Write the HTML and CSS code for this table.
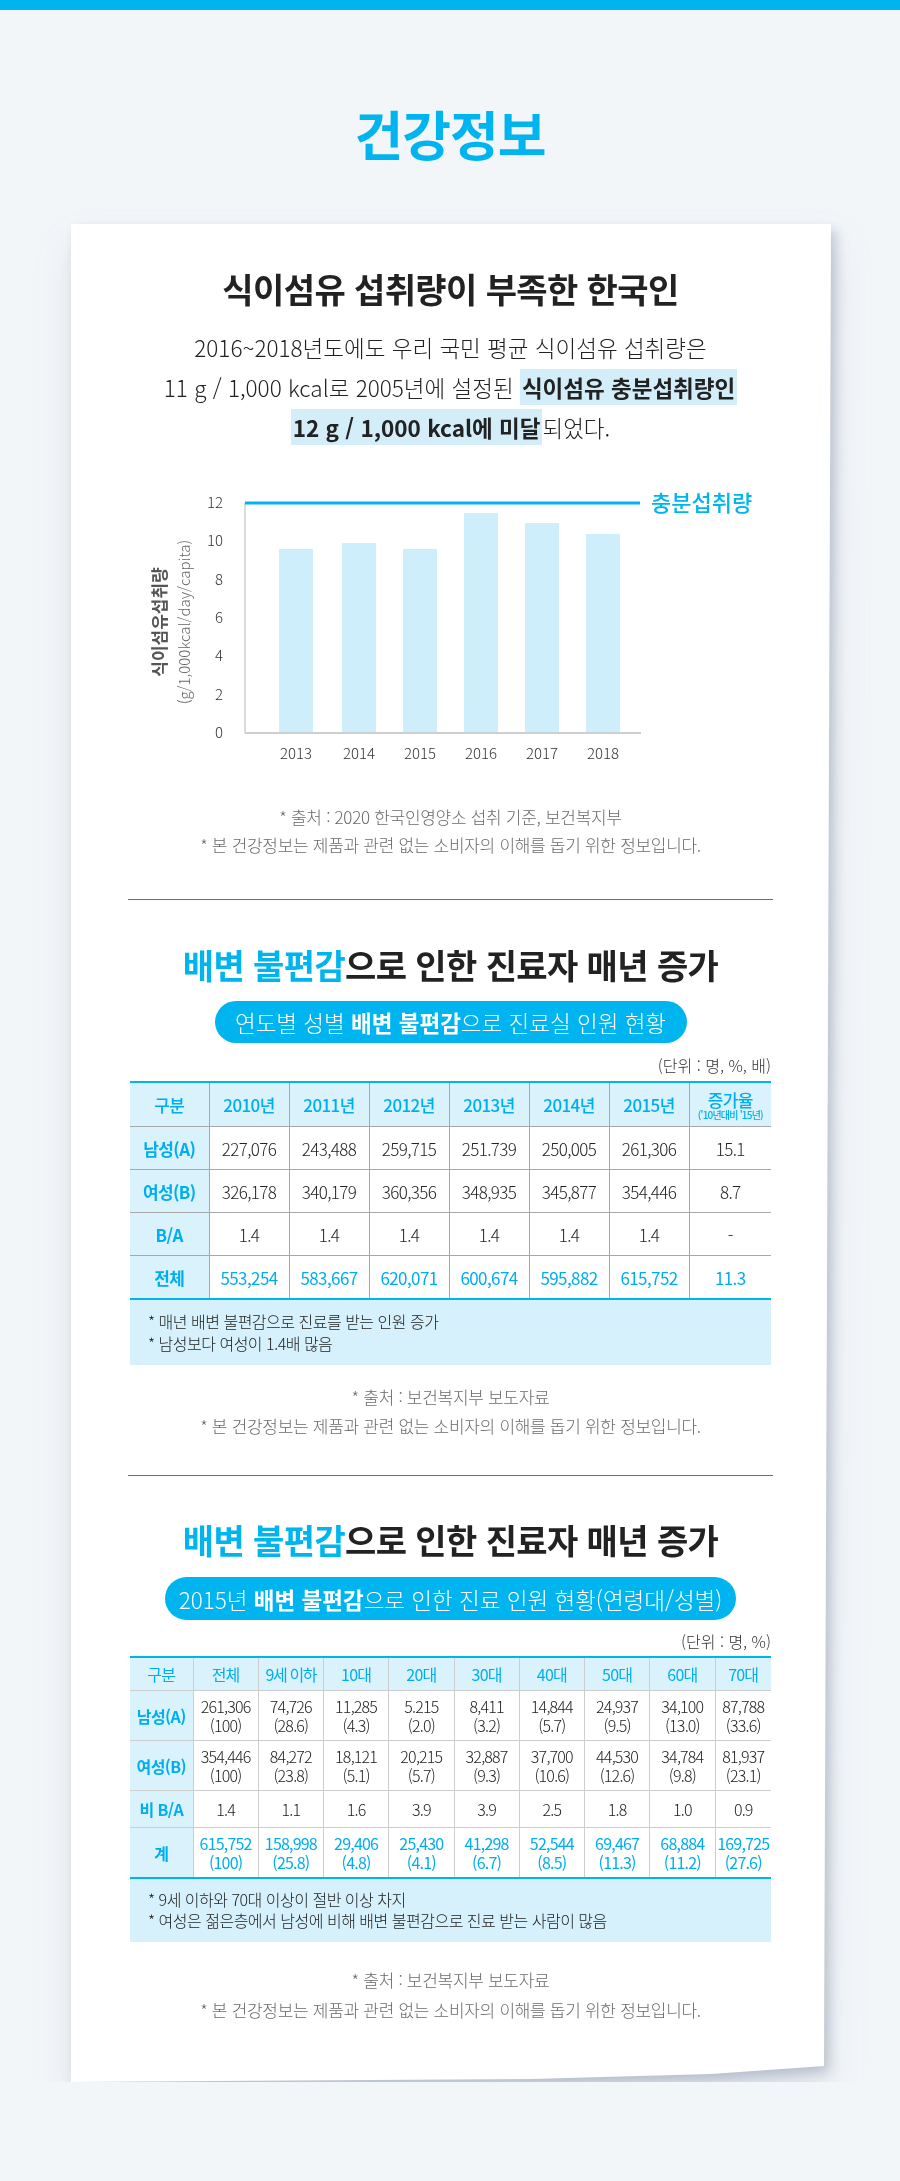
FILE: index.html
```html
<!DOCTYPE html>
<html lang="ko">
<head>
<meta charset="utf-8">
<title>건강정보</title>
<link rel="stylesheet" href="styles.css">
</head>
<body>
<div class="topbar"></div>
<h1 class="page-title">건강정보</h1>

<div class="card-shadow">
  <article class="card">
    <section class="sec sec1">
      <h2 class="heading">식이섬유 섭취량이 부족한 한국인</h2>
      <p class="lead">2016~2018년도에도 우리 국민 평균 식이섬유 섭취량은<br>11 g / 1,000 kcal로 2005년에 설정된 <span class="hl">식이섬유 충분섭취량인</span><br><span class="hl">12 g / 1,000 kcal에 미달</span>되었다.</p>
      <svg class="chart" width="645" height="290" viewBox="0 0 645 290">
        <g class="ytitle">
          <text class="ytitle-main" transform="translate(30,142) rotate(-90)" text-anchor="middle" dominant-baseline="central">식이섬유섭취량</text>
          <text class="ytitle-sub" transform="translate(55,142) rotate(-90)" text-anchor="middle" dominant-baseline="central">(g/1,000kcal/day/capita)</text>
        </g>
        <g class="ylab" text-anchor="end">
          <text x="95" y="28">12</text>
          <text x="95" y="66">10</text>
          <text x="95" y="105">8</text>
          <text x="95" y="143">6</text>
          <text x="95" y="181">4</text>
          <text x="95" y="220">2</text>
          <text x="95" y="258">0</text>
        </g>
        <g class="bars">
          <rect x="151" y="69" width="34" height="184"/>
          <rect x="214" y="63" width="34" height="190"/>
          <rect x="275" y="69" width="34" height="184"/>
          <rect x="336" y="33" width="34" height="220"/>
          <rect x="397" y="43" width="34" height="210"/>
          <rect x="458" y="54" width="34" height="199"/>
        </g>
        <line class="axis" x1="117" y1="23" x2="117" y2="253"/>
        <line class="axis base" x1="117" y1="253" x2="513" y2="253"/>
        <line class="target" x1="117" y1="23" x2="512" y2="23"/>
        <text class="target-label" x="523" y="31">충분섭취량</text>
        <g class="xlab" text-anchor="middle">
          <text x="168" y="279">2013</text>
          <text x="231" y="279">2014</text>
          <text x="292" y="279">2015</text>
          <text x="353" y="279">2016</text>
          <text x="414" y="279">2017</text>
          <text x="475" y="279">2018</text>
        </g>
      </svg>
      <div class="source s1">
        <p>* 출처 : 2020 한국인영양소 섭취 기준, 보건복지부</p>
        <p>* 본 건강정보는 제품과 관련 없는 소비자의 이해를 돕기 위한 정보입니다.</p>
      </div>
    </section>

    <hr class="divider d1">

    <section class="sec sec2">
      <h2 class="heading"><span class="blue">배변 불편감</span>으로 인한 진료자 매년 증가</h2>
      <div class="pill-row"><div class="pill pill1"><span>연도별 성별 <b>배변 불편감</b>으로 진료실 인원 현황</span></div></div>
      <p class="unit u1">(단위 : 명, %, 배)</p>
      <table class="tbl tbl1">
        <colgroup><col class="c0"><col><col><col><col><col><col><col class="cl"></colgroup>
        <thead>
          <tr><th>구분</th><th>2010년</th><th>2011년</th><th>2012년</th><th>2013년</th><th>2014년</th><th>2015년</th><th class="rate">증가율<small>('10년대비 '15년)</small></th></tr>
        </thead>
        <tbody>
          <tr><th>남성(A)</th><td>227,076</td><td>243,488</td><td>259,715</td><td>251.739</td><td>250,005</td><td>261,306</td><td>15.1</td></tr>
          <tr><th>여성(B)</th><td>326,178</td><td>340,179</td><td>360,356</td><td>348,935</td><td>345,877</td><td>354,446</td><td>8.7</td></tr>
          <tr><th>B/A</th><td>1.4</td><td>1.4</td><td>1.4</td><td>1.4</td><td>1.4</td><td>1.4</td><td>-</td></tr>
          <tr class="total"><th>전체</th><td>553,254</td><td>583,667</td><td>620,071</td><td>600,674</td><td>595,882</td><td>615,752</td><td>11.3</td></tr>
        </tbody>
      </table>
      <div class="notes n1">
        <p>* 매년 배변 불편감으로 진료를 받는 인원 증가</p>
        <p>* 남성보다 여성이 1.4배 많음</p>
      </div>
      <div class="source s2">
        <p>* 출처 : 보건복지부 보도자료</p>
        <p>* 본 건강정보는 제품과 관련 없는 소비자의 이해를 돕기 위한 정보입니다.</p>
      </div>
    </section>

    <hr class="divider d2">

    <section class="sec sec3">
      <h2 class="heading"><span class="blue">배변 불편감</span>으로 인한 진료자 매년 증가</h2>
      <div class="pill-row"><div class="pill pill2"><span>2015년 <b>배변 불편감</b>으로 인한 진료 인원 현황(연령대/성별)</span></div></div>
      <p class="unit u2">(단위 : 명, %)</p>
      <table class="tbl tbl2">
        <colgroup><col class="c0"><col><col><col><col><col><col><col><col><col class="cl"></colgroup>
        <thead>
          <tr><th>구분</th><th>전체</th><th class="tight">9세 이하</th><th>10대</th><th>20대</th><th>30대</th><th>40대</th><th>50대</th><th>60대</th><th>70대</th></tr>
        </thead>
        <tbody>
          <tr class="r2"><th>남성(A)</th><td>261,306<br>(100)</td><td>74,726<br>(28.6)</td><td>11,285<br>(4.3)</td><td>5.215<br>(2.0)</td><td>8,411<br>(3.2)</td><td>14,844<br>(5.7)</td><td>24,937<br>(9.5)</td><td>34,100<br>(13.0)</td><td>87,788<br>(33.6)</td></tr>
          <tr class="r2"><th>여성(B)</th><td>354,446<br>(100)</td><td>84,272<br>(23.8)</td><td>18,121<br>(5.1)</td><td>20,215<br>(5.7)</td><td>32,887<br>(9.3)</td><td>37,700<br>(10.6)</td><td>44,530<br>(12.6)</td><td>34,784<br>(9.8)</td><td>81,937<br>(23.1)</td></tr>
          <tr class="r1"><th>비 B/A</th><td>1.4</td><td>1.1</td><td>1.6</td><td>3.9</td><td>3.9</td><td>2.5</td><td>1.8</td><td>1.0</td><td>0.9</td></tr>
          <tr class="r2 total"><th>계</th><td>615,752<br>(100)</td><td>158,998<br>(25.8)</td><td>29,406<br>(4.8)</td><td>25,430<br>(4.1)</td><td>41,298<br>(6.7)</td><td>52,544<br>(8.5)</td><td>69,467<br>(11.3)</td><td>68,884<br>(11.2)</td><td>169,725<br>(27.6)</td></tr>
        </tbody>
      </table>
      <div class="notes n2">
        <p>* 9세 이하와 70대 이상이 절반 이상 차지</p>
        <p>* 여성은 젊은층에서 남성에 비해 배변 불편감으로 진료 받는 사람이 많음</p>
      </div>
      <div class="source s3">
        <p>* 출처 : 보건복지부 보도자료</p>
        <p>* 본 건강정보는 제품과 관련 없는 소비자의 이해를 돕기 위한 정보입니다.</p>
      </div>
    </section>
  </article>
</div>
</body>
</html>
```

FILE: styles.css
```css
html {
  background: #f3f6f9;
}
body {
  margin: 0;
  background: #f3f6f9;
  font-family: "Noto Sans CJK KR", "Noto Sans", sans-serif;
  color: #222;
}
p { margin: 0; }

.topbar {
  height: 10px;
  background: #00b5ef;
}

.page-title {
  margin: 93px 0 0;
  height: 60px;
  line-height: 60px;
  font-size: 53px;
  font-weight: 700;
  letter-spacing: -1px;
  color: #00b5ef;
  text-align: center;
}

.card-shadow {
  margin: 61px 0 0 71px;
  width: 760px;
  filter: drop-shadow(5px 6px 6px rgba(95, 112, 140, 0.32)) drop-shadow(2px 22px 18px rgba(110, 125, 150, 0.16));
}

.card {
  background: #fff;
  padding: 44px 58px 57px 57px;
  clip-path: polygon(0 0, 100% 0, calc(100% - 7px) calc(100% - 16px), calc(100% - 120px) calc(100% - 8px), calc(100% - 300px) calc(100% - 3px), 0 100%);
}

.heading {
  margin: 0;
  height: 42px;
  line-height: 42px;
  font-size: 34px;
  font-weight: 700;
  letter-spacing: -0.6px;
  color: #222;
  text-align: center;
  white-space: nowrap;
}
.heading .blue { color: #00b4ee; }

.lead {
  margin-top: 17px;
  font-size: 22.5px;
  font-weight: 300;
  line-height: 40px;
  letter-spacing: 0;
  text-align: center;
  color: #222;
}
.hl {
  background: #d3eef9;
  font-weight: 700;
  padding: 2px 2px;
}

.chart {
  display: block;
  margin-top: 33px;
  font-family: "Noto Sans CJK KR", "Noto Sans", sans-serif;
}
.chart .ylab text,
.chart .xlab text {
  font-size: 15px;
  font-weight: 300;
  fill: #333;
}
.chart .ytitle-main {
  font-size: 17px;
  font-weight: 700;
  fill: #555;
}
.chart .ytitle-sub {
  font-size: 15px;
  font-weight: 300;
  fill: #666;
}
.chart .bars rect { fill: #cdeefa; }
.chart .axis { stroke: #cfcfcf; stroke-width: 1.5; }
.chart .axis.base { stroke-width: 2; }
.chart .target { stroke: #00b5ef; stroke-width: 3; }
.chart .target-label {
  font-size: 22px;
  font-weight: 500;
  fill: #00b4ee;
}

.source {
  text-align: center;
  font-size: 17px;
  font-weight: 300;
  letter-spacing: -0.3px;
  color: #6b6b6b;
}
.source.s1 { margin-top: 33px; line-height: 28px; }
.source.s2 { margin-top: 17px; line-height: 29px; }
.source.s3 { margin-top: 23px; line-height: 30px; }

.divider {
  border: 0;
  height: 1px;
  background: #6e6e6e;
  margin: 0;
}
.divider.d1 { margin-top: 40px; }
.divider.d2 { margin-top: 35px; }

.sec2 { padding-top: 44px; }
.sec3 { padding-top: 43px; }

.pill-row {
  display: flex;
  justify-content: center;
}
.pill {
  display: flex;
  align-items: center;
  justify-content: center;
  background: #00b5ef;
  color: #fff;
  border-radius: 22px;
  font-size: 22.5px;
  font-weight: 300;
  letter-spacing: 0;
  white-space: nowrap;
}
.pill b { font-weight: 700; }
.pill1 { margin-top: 15px; width: 472px; height: 42px; }
.pill2 { margin-top: 16px; width: 571px; height: 43px; }

.unit {
  height: 20px;
  line-height: 20px;
  font-size: 16px;
  font-weight: 300;
  letter-spacing: 0;
  text-align: right;
  color: #333;
  padding-right: 2px;
}
.unit.u1 { margin-top: 12px; }
.unit.u2 { margin-top: 11px; }

.tbl {
  width: 641px;
  margin: 6px auto 0;
  border-collapse: collapse;
  table-layout: fixed;
  border-top: 2px solid #00b4ee;
  border-bottom: 2px solid #00b4ee;
}
.tbl2 { margin-top: 5px; }
.tbl th,
.tbl td {
  padding: 0;
  text-align: center;
  border: 1px solid #a8a8a8;
}
.tbl tr > :first-child { border-left: 0; }
.tbl tr > :last-child { border-right: 0; }
.tbl thead th {
  background: #d9f2fb;
  color: #00aeef;
  font-weight: 500;
}
.tbl tbody th {
  background: #d9f2fb;
  color: #00aeef;
  font-weight: 700;
}
.tbl td {
  font-weight: 300;
  color: #222;
}
.tbl .total td {
  color: #00aeef;
  font-weight: 400;
}

.tbl1 .c0 { width: 79px; }
.tbl1 .cl { width: 82px; }
.tbl1 th, .tbl1 td {
  font-size: 17px;
  letter-spacing: -0.6px;
}
.tbl1 thead th { height: 41px; }
.tbl1 tbody th, .tbl1 tbody td { height: 42px; }
.tbl1 .rate { line-height: 18px; padding-top: 2px; }
.tbl1 .rate small {
  display: block;
  font-size: 10px;
  font-weight: 500;
  letter-spacing: -0.8px;
  line-height: 12px;
}

.tbl2 th, .tbl2 td { border-color: #cdcdcd; }
.tbl2 .c0 { width: 63px; }
.tbl2 .cl { width: 56px; }
.tbl2 thead th {
  height: 32px;
  font-size: 16px;
  font-weight: 400;
  letter-spacing: -0.8px;
}
.tbl2 thead th.tight { letter-spacing: -1.4px; }
.tbl2 tbody th {
  font-size: 16px;
  letter-spacing: -0.6px;
}
.tbl2 td {
  font-size: 16px;
  line-height: 19px;
  letter-spacing: -0.8px;
}
.tbl2 .r2 th, .tbl2 .r2 td { height: 49px; }
.tbl2 .r1 th, .tbl2 .r1 td { height: 36px; }

.notes {
  background: #d6f1fb;
  padding: 10px 18px 11px;
  font-size: 16px;
  font-weight: 300;
  letter-spacing: -0.5px;
  color: #222;
  width: 641px;
  box-sizing: border-box;
  margin: 0 auto;
}
.notes.n1 { line-height: 22px; }
.notes.n2 { line-height: 21px; }
```
